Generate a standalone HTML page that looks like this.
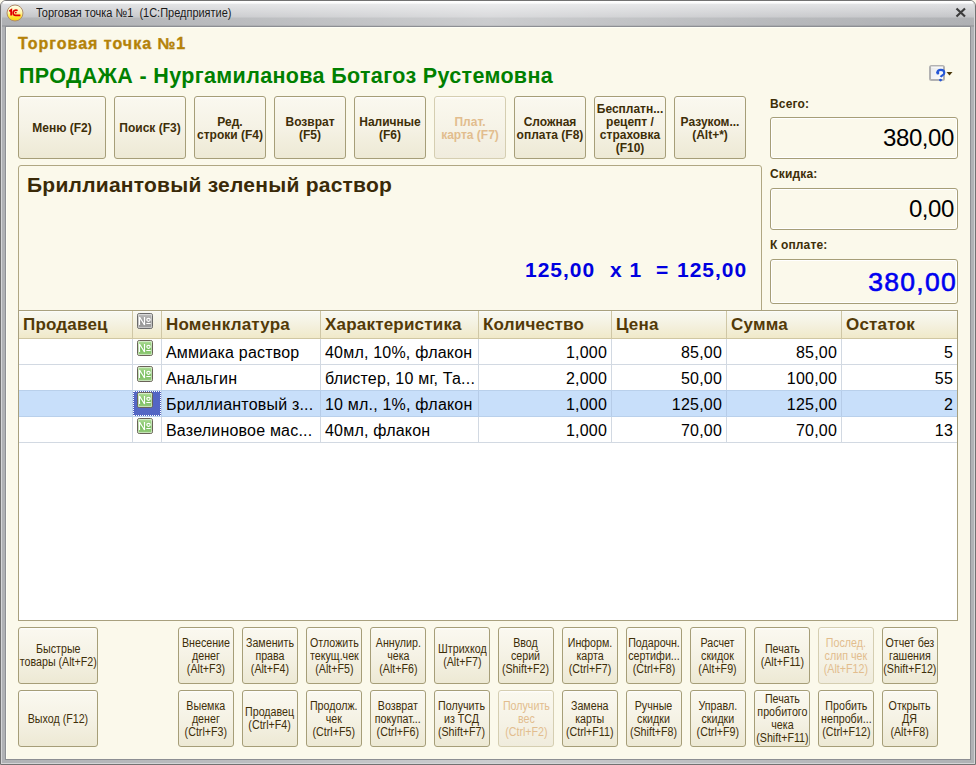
<!DOCTYPE html>
<html><head><meta charset="utf-8">
<style>
*{box-sizing:border-box;margin:0;padding:0}
html,body{width:976px;height:765px;overflow:hidden;background:#FBF9EB;font-family:"Liberation Sans",sans-serif}
.abs{position:absolute;white-space:nowrap}
#win{position:absolute;left:0;top:0;width:976px;height:765px;border-radius:6px 6px 0 0;border:1px solid #727272;
 background:
  linear-gradient(90deg,rgba(255,255,255,0) 0%,rgba(255,255,255,0.15) 25%,rgba(255,255,255,0.35) 50%,rgba(255,255,255,0.1) 80%,rgba(255,255,255,0) 100%),
  linear-gradient(#FFFFFF 0px,#FCFCFC 2px,#DFE0E2 3.5px,#C5C6C9 16px,#B1B3B6 17px,#AEB0B3 24px,#8E9094 25px,#B0B2B5 26px,#B0B2B5 100%)}
#winin{position:absolute;left:0;top:0;right:0;bottom:0;border-left:1px solid #D4D5D7;border-right:1px solid #D4D5D7;border-bottom:1px solid #D4D5D7;border-top:1px solid #FFFFFF;border-radius:5px 5px 0 0}
#content{position:absolute;left:6px;top:27px;width:964px;height:732px;background:#FBF9EB;box-shadow:0 0 0 1px #8D8F93;border-left:1px solid #FFFFF5;border-top:1px solid #FFFFF5}
#title{position:absolute;left:36px;top:6px;font-size:12px;color:#1A1A1A;white-space:nowrap;transform-origin:0 0;transform:scaleX(0.915)}
.logo{position:absolute;left:7px;top:5px;width:16px;height:16px;border-radius:50%;background:linear-gradient(#FFFEF4,#FFF7B8 40%,#FFE83A 70%,#F8D800);border:1px solid #B09070}
.btn{position:absolute;border:1px solid #A69E78;border-radius:3px;background:linear-gradient(#FFFFFF 0px,#FAF8EF 2px,#F5F2E5 50%,#EDE9D4 100%);color:#3E2E08;text-align:center;display:flex;align-items:center;justify-content:center}
.tb{font-weight:bold;font-size:12px;line-height:13px;padding-top:2px}
.bb{font-size:12px;line-height:13px;padding-top:1px}
.bb span{display:inline-block;transform:scaleX(0.89);white-space:nowrap;flex-shrink:0}
.btn.dis{color:#E2BD8E;border-color:#D5CEB1;background:linear-gradient(#FFFFFF 0px,#FAF8EE 2px,#F6F3E7 50%,#F0ECDD 100%)}
.lbl{position:absolute;font-weight:bold;font-size:12px;color:#3E2E08;letter-spacing:0.15px}
.fld{position:absolute;left:770px;width:188px;border:1px solid #A69E78;border-radius:3px;background:#FBF9EB;box-shadow:inset 0 0 0 1px #FFFFFF;text-align:right;font-size:24px;color:#000;padding-right:3px;letter-spacing:-0.4px}
.panel{position:absolute;border:1px solid #B0A783;border-radius:3px 3px 0 0;background:#FBF9EB}
.th{position:absolute;font-weight:bold;font-size:17px;line-height:20px;color:#533A08;white-space:nowrap;letter-spacing:0.2px}
.td{position:absolute;font-size:16px;line-height:25px;color:#000;white-space:nowrap;letter-spacing:0.2px}
</style></head><body>
<div id="win"><div id="winin"></div></div>
<svg class="abs" style="left:6px;top:4px" width="19" height="19" viewBox="6 4 19 19"><defs><linearGradient id="lg" x1="0" y1="0" x2="0" y2="1"><stop offset="0" stop-color="#FFFFF0"/><stop offset="0.45" stop-color="#FFF7B0"/><stop offset="0.7" stop-color="#FFE840"/><stop offset="1" stop-color="#F6D200"/></linearGradient></defs><circle cx="15" cy="13" r="8" fill="url(#lg)" stroke="#B08C6C" stroke-width="1"/><path d="M9.3 11.2L11.2 10V15.6" stroke="#E00000" stroke-width="1.9" fill="none"/><path d="M17.6 10.6C16.8 10.1 15.9 10 15.2 10.2C13.6 10.7 13 12 13.2 13.3C13.4 14.6 14.4 15.3 15.6 15.3H20.4" stroke="#E00000" stroke-width="1.7" fill="none"/><circle cx="15.8" cy="12.6" r="0.9" fill="#E00000"/></svg>
<div id="title">Торговая точка №1&nbsp; (1С:Предприятие)</div>
<div id="content"></div>
<svg class="abs" style="left:955px;top:7px" width="12" height="11" viewBox="0 0 12 11"><path d="M1.5 1.5 L10 9.5 M10 1.5 L1.5 9.5" stroke="#3C3C3C" stroke-width="2.2"/></svg>
<div class="abs" style="left:18px;top:35px;font-weight:bold;font-size:16px;color:#B48208;letter-spacing:1.0px;-webkit-text-stroke:0.35px #B48208">Торговая точка №1</div>
<div class="abs" style="left:19px;top:64px;font-weight:bold;font-size:21.5px;color:#008000;letter-spacing:0.35px">ПРОДАЖА - Нургамиланова Ботагоз Рустемовна</div>
<svg class="abs" style="left:926px;top:62px" width="30" height="24" viewBox="926 62 30 24"><defs><linearGradient id="hg" x1="0" y1="0" x2="1" y2="1"><stop offset="0" stop-color="#E6E8EA"/><stop offset="1" stop-color="#FFFFFF"/></linearGradient></defs><rect x="930" y="66" width="14" height="14" rx="1.5" fill="url(#hg)" stroke="#B2B2B2" stroke-width="2"/><path d="M931 67H943" stroke="#FFFFFF" stroke-width="1"/><path d="M937.2 73C937.4 70.7 939.4 69.9 940.9 69.9C943.1 69.9 944.3 71.2 944.3 72.9C944.3 75 941.4 75.4 940.7 77" stroke="#2456D6" stroke-width="2.1" fill="none"/><circle cx="937.8" cy="73.1" r="1.5" fill="#2456D6"/><circle cx="940.5" cy="80.1" r="1.45" fill="#2456D6"/><path d="M946.5 72H952.5L949.5 75.5Z" fill="#4A3608"/></svg>
<div class="btn tb" style="left:18px;top:96px;width:88px;height:63px">Меню (F2)</div>
<div class="btn tb" style="left:114px;top:96px;width:72px;height:63px">Поиск (F3)</div>
<div class="btn tb" style="left:194px;top:96px;width:72px;height:63px">Ред.<br>строки (F4)</div>
<div class="btn tb" style="left:274px;top:96px;width:72px;height:63px">Возврат<br>(F5)</div>
<div class="btn tb" style="left:354px;top:96px;width:72px;height:63px">Наличные<br>(F6)</div>
<div class="btn tb dis" style="left:434px;top:96px;width:72px;height:63px">Плат.<br>карта (F7)</div>
<div class="btn tb" style="left:514px;top:96px;width:72px;height:63px">Сложная<br>оплата (F8)</div>
<div class="btn tb" style="left:594px;top:96px;width:72px;height:63px">Бесплатн...<br>рецепт /<br>страховка<br>(F10)</div>
<div class="btn tb" style="left:674px;top:96px;width:72px;height:63px">Разуком...<br>(Alt+*)</div>
<div class="lbl" style="left:770px;top:97px">Всего:</div>
<div class="fld" style="top:117px;height:42px;line-height:40px">380,00</div>
<div class="lbl" style="left:770px;top:167px">Скидка:</div>
<div class="fld" style="top:188px;height:42px;line-height:40px">0,00</div>
<div class="lbl" style="left:770px;top:238px">К оплате:</div>
<div class="fld" style="top:259px;height:45px;line-height:44px;color:#0000F0;font-weight:normal;-webkit-text-stroke:0.6px #0000F0;font-size:26.5px;letter-spacing:1.3px;padding-right:0px">380,00</div>
<div class="panel" style="left:18px;top:165px;width:744px;height:150px"></div>
<div class="abs" style="left:27px;top:173px;font-weight:bold;font-size:21px;color:#3A2A08;letter-spacing:0.25px">Бриллиантовый зеленый раствор</div>
<div class="abs" style="left:525px;top:258px;font-weight:bold;font-size:21px;color:#0000E0;letter-spacing:1.0px">125,00</div>
<div class="abs" style="left:610px;top:258px;font-weight:bold;font-size:21px;color:#0000E0;letter-spacing:1.0px">x 1</div>
<div class="abs" style="left:656px;top:258px;font-weight:bold;font-size:21px;color:#0000E0;letter-spacing:1.0px">=</div>
<div class="abs" style="left:677px;top:258px;font-weight:bold;font-size:21px;color:#0000E0;letter-spacing:1.0px">125,00</div>
<div class="abs" style="left:18px;top:310px;width:940px;height:311px;border:1px solid #A8A07E;background:#FFFFFF"></div>
<div class="abs" style="left:19px;top:311px;width:938px;height:28px;background:linear-gradient(#FFFFFF 0px,#F8F8F1 1px,#F4F1E0 50%,#F0E9C9 100%);border-bottom:1px solid #D0C7A2"></div>
<div class="abs" style="left:132px;top:311px;width:1px;height:27px;background:#CFC7A6"></div>
<div class="abs" style="left:132px;top:339px;width:1px;height:103px;background:#D2D9E2"></div>
<div class="abs" style="left:161px;top:311px;width:1px;height:27px;background:#CFC7A6"></div>
<div class="abs" style="left:161px;top:339px;width:1px;height:103px;background:#D2D9E2"></div>
<div class="abs" style="left:320px;top:311px;width:1px;height:27px;background:#CFC7A6"></div>
<div class="abs" style="left:320px;top:339px;width:1px;height:103px;background:#D2D9E2"></div>
<div class="abs" style="left:478px;top:311px;width:1px;height:27px;background:#CFC7A6"></div>
<div class="abs" style="left:478px;top:339px;width:1px;height:103px;background:#D2D9E2"></div>
<div class="abs" style="left:611px;top:311px;width:1px;height:27px;background:#CFC7A6"></div>
<div class="abs" style="left:611px;top:339px;width:1px;height:103px;background:#D2D9E2"></div>
<div class="abs" style="left:726px;top:311px;width:1px;height:27px;background:#CFC7A6"></div>
<div class="abs" style="left:726px;top:339px;width:1px;height:103px;background:#D2D9E2"></div>
<div class="abs" style="left:841px;top:311px;width:1px;height:27px;background:#CFC7A6"></div>
<div class="abs" style="left:841px;top:339px;width:1px;height:103px;background:#D2D9E2"></div>
<div class="abs" style="left:19px;top:364px;width:938px;height:1px;background:#D2D9E2"></div>
<div class="abs" style="left:19px;top:390px;width:938px;height:1px;background:#D2D9E2"></div>
<div class="abs" style="left:19px;top:416px;width:938px;height:1px;background:#D2D9E2"></div>
<div class="abs" style="left:19px;top:442px;width:938px;height:1px;background:#D2D9E2"></div>
<div class="abs" style="left:19px;top:390px;width:938px;height:27px;background:#C8DFFA;border-top:1px solid #B9D0EB;border-bottom:1px solid #B9D0EB"></div>
<div class="abs" style="left:132px;top:391px;width:1px;height:25px;background:#B6CCE8"></div>
<div class="abs" style="left:161px;top:391px;width:1px;height:25px;background:#B6CCE8"></div>
<div class="abs" style="left:320px;top:391px;width:1px;height:25px;background:#B6CCE8"></div>
<div class="abs" style="left:478px;top:391px;width:1px;height:25px;background:#B6CCE8"></div>
<div class="abs" style="left:611px;top:391px;width:1px;height:25px;background:#B6CCE8"></div>
<div class="abs" style="left:726px;top:391px;width:1px;height:25px;background:#B6CCE8"></div>
<div class="abs" style="left:841px;top:391px;width:1px;height:25px;background:#B6CCE8"></div>
<div class="abs" style="left:133px;top:391px;width:28px;height:25px;background:#5366C4;outline:1px dotted #FFFFFF;outline-offset:-1px"></div>
<div class="th" style="left:23px;top:315px">Продавец</div>
<div class="th" style="left:166px;top:315px">Номенклатура</div>
<div class="th" style="left:325px;top:315px">Характеристика</div>
<div class="th" style="left:483px;top:315px">Количество</div>
<div class="th" style="left:616px;top:315px">Цена</div>
<div class="th" style="left:731px;top:315px">Сумма</div>
<div class="th" style="left:846px;top:315px">Остаток</div>
<svg class="abs" style="left:137px;top:313px" width="16" height="16" viewBox="0 0 16 16"><defs><linearGradient id="g313" x1="0" y1="0" x2="0" y2="1"><stop offset="0" stop-color="#C4C4C4"/><stop offset="0.55" stop-color="#929292"/><stop offset="1" stop-color="#A2A2A2"/></linearGradient></defs><rect x="0.5" y="0.5" width="15" height="15" rx="1.8" fill="url(#g313)" stroke="#6A6A6A"/><rect x="1.5" y="1.5" width="13" height="13" fill="none" stroke="rgba(255,255,255,0.4)" stroke-width="1"/><path d="M2.5 12V4L7.5 12V4" stroke="#FFFFFF" stroke-width="1.2" fill="none" stroke-linejoin="bevel"/><ellipse cx="11.5" cy="6.8" rx="1.7" ry="1.5" stroke="#FFFFFF" stroke-width="1.2" fill="none"/><path d="M9.3 10.5H13.7" stroke="#FFFFFF" stroke-width="1.1"/></svg>
<svg class="abs" style="left:137px;top:340px" width="16" height="16" viewBox="0 0 16 16"><defs><linearGradient id="g340" x1="0" y1="0" x2="0" y2="1"><stop offset="0" stop-color="#B8E2A2"/><stop offset="0.55" stop-color="#74BC58"/><stop offset="1" stop-color="#9ACE82"/></linearGradient></defs><rect x="0.5" y="0.5" width="15" height="15" rx="1.8" fill="url(#g340)" stroke="#6A6258"/><rect x="1.5" y="1.5" width="13" height="13" fill="none" stroke="rgba(255,255,255,0.45)" stroke-width="1"/><path d="M2.5 12V4L7.5 12V4" stroke="#FFFFFF" stroke-width="1.2" fill="none" stroke-linejoin="bevel"/><ellipse cx="11.5" cy="6.8" rx="1.7" ry="1.5" stroke="#FFFFFF" stroke-width="1.2" fill="none"/><path d="M9.3 10.5H13.7" stroke="#FFFFFF" stroke-width="1.1"/></svg>
<div class="td" style="left:166px;top:340px">Аммиака раствор</div>
<div class="td" style="left:325px;top:340px">40мл, 10%, флакон</div>
<div class="td" style="left:478px;width:129px;text-align:right;top:340px">1,000</div>
<div class="td" style="left:611px;width:111px;text-align:right;top:340px">85,00</div>
<div class="td" style="left:726px;width:111px;text-align:right;top:340px">85,00</div>
<div class="td" style="left:841px;width:112px;text-align:right;top:340px">5</div>
<svg class="abs" style="left:137px;top:366px" width="16" height="16" viewBox="0 0 16 16"><defs><linearGradient id="g366" x1="0" y1="0" x2="0" y2="1"><stop offset="0" stop-color="#B8E2A2"/><stop offset="0.55" stop-color="#74BC58"/><stop offset="1" stop-color="#9ACE82"/></linearGradient></defs><rect x="0.5" y="0.5" width="15" height="15" rx="1.8" fill="url(#g366)" stroke="#6A6258"/><rect x="1.5" y="1.5" width="13" height="13" fill="none" stroke="rgba(255,255,255,0.45)" stroke-width="1"/><path d="M2.5 12V4L7.5 12V4" stroke="#FFFFFF" stroke-width="1.2" fill="none" stroke-linejoin="bevel"/><ellipse cx="11.5" cy="6.8" rx="1.7" ry="1.5" stroke="#FFFFFF" stroke-width="1.2" fill="none"/><path d="M9.3 10.5H13.7" stroke="#FFFFFF" stroke-width="1.1"/></svg>
<div class="td" style="left:166px;top:366px">Анальгин</div>
<div class="td" style="left:325px;top:366px">блистер, 10 мг, Та...</div>
<div class="td" style="left:478px;width:129px;text-align:right;top:366px">2,000</div>
<div class="td" style="left:611px;width:111px;text-align:right;top:366px">50,00</div>
<div class="td" style="left:726px;width:111px;text-align:right;top:366px">100,00</div>
<div class="td" style="left:841px;width:112px;text-align:right;top:366px">55</div>
<svg class="abs" style="left:137px;top:392px" width="16" height="16" viewBox="0 0 16 16"><defs><linearGradient id="g392" x1="0" y1="0" x2="0" y2="1"><stop offset="0" stop-color="#B8E2A2"/><stop offset="0.55" stop-color="#74BC58"/><stop offset="1" stop-color="#9ACE82"/></linearGradient></defs><rect x="0.5" y="0.5" width="15" height="15" rx="1.8" fill="url(#g392)" stroke="#6A6258"/><rect x="1.5" y="1.5" width="13" height="13" fill="none" stroke="rgba(255,255,255,0.45)" stroke-width="1"/><path d="M2.5 12V4L7.5 12V4" stroke="#FFFFFF" stroke-width="1.2" fill="none" stroke-linejoin="bevel"/><ellipse cx="11.5" cy="6.8" rx="1.7" ry="1.5" stroke="#FFFFFF" stroke-width="1.2" fill="none"/><path d="M9.3 10.5H13.7" stroke="#FFFFFF" stroke-width="1.1"/></svg>
<div class="td" style="left:166px;top:392px">Бриллиантовый з...</div>
<div class="td" style="left:325px;top:392px">10 мл., 1%, флакон</div>
<div class="td" style="left:478px;width:129px;text-align:right;top:392px">1,000</div>
<div class="td" style="left:611px;width:111px;text-align:right;top:392px">125,00</div>
<div class="td" style="left:726px;width:111px;text-align:right;top:392px">125,00</div>
<div class="td" style="left:841px;width:112px;text-align:right;top:392px">2</div>
<svg class="abs" style="left:137px;top:418px" width="16" height="16" viewBox="0 0 16 16"><defs><linearGradient id="g418" x1="0" y1="0" x2="0" y2="1"><stop offset="0" stop-color="#B8E2A2"/><stop offset="0.55" stop-color="#74BC58"/><stop offset="1" stop-color="#9ACE82"/></linearGradient></defs><rect x="0.5" y="0.5" width="15" height="15" rx="1.8" fill="url(#g418)" stroke="#6A6258"/><rect x="1.5" y="1.5" width="13" height="13" fill="none" stroke="rgba(255,255,255,0.45)" stroke-width="1"/><path d="M2.5 12V4L7.5 12V4" stroke="#FFFFFF" stroke-width="1.2" fill="none" stroke-linejoin="bevel"/><ellipse cx="11.5" cy="6.8" rx="1.7" ry="1.5" stroke="#FFFFFF" stroke-width="1.2" fill="none"/><path d="M9.3 10.5H13.7" stroke="#FFFFFF" stroke-width="1.1"/></svg>
<div class="td" style="left:166px;top:418px">Вазелиновое мас...</div>
<div class="td" style="left:325px;top:418px">40мл, флакон</div>
<div class="td" style="left:478px;width:129px;text-align:right;top:418px">1,000</div>
<div class="td" style="left:611px;width:111px;text-align:right;top:418px">70,00</div>
<div class="td" style="left:726px;width:111px;text-align:right;top:418px">70,00</div>
<div class="td" style="left:841px;width:112px;text-align:right;top:418px">13</div>
<div class="btn bb" style="left:18px;top:627px;width:80px;height:57px"><span>Быстрые<br>товары (Alt+F2)</span></div>
<div class="btn bb" style="left:18px;top:690px;width:80px;height:57px;padding-top:2px"><span>Выход (F12)</span></div>
<div class="btn bb" style="left:178px;top:627px;width:56px;height:57px"><span>Внесение<br>денег<br>(Alt+F3)</span></div>
<div class="btn bb" style="left:242px;top:627px;width:56px;height:57px"><span>Заменить<br>права<br>(Alt+F4)</span></div>
<div class="btn bb" style="left:306px;top:627px;width:56px;height:57px"><span>Отложить<br>текущ.чек<br>(Alt+F5)</span></div>
<div class="btn bb" style="left:370px;top:627px;width:56px;height:57px"><span>Аннулир.<br>чека<br>(Alt+F6)</span></div>
<div class="btn bb" style="left:434px;top:627px;width:56px;height:57px"><span>Штрихкод<br>(Alt+F7)</span></div>
<div class="btn bb" style="left:498px;top:627px;width:56px;height:57px"><span>Ввод<br>серий<br>(Shift+F2)</span></div>
<div class="btn bb" style="left:562px;top:627px;width:56px;height:57px"><span>Информ.<br>карта<br>(Ctrl+F7)</span></div>
<div class="btn bb" style="left:626px;top:627px;width:56px;height:57px"><span>Подарочн.<br>сертифи...<br>(Ctrl+F8)</span></div>
<div class="btn bb" style="left:690px;top:627px;width:56px;height:57px"><span>Расчет<br>скидок<br>(Alt+F9)</span></div>
<div class="btn bb" style="left:754px;top:627px;width:56px;height:57px"><span>Печать<br>(Alt+F11)</span></div>
<div class="btn bb dis" style="left:818px;top:627px;width:56px;height:57px"><span>Послед.<br>слип чек<br>(Alt+F12)</span></div>
<div class="btn bb" style="left:882px;top:627px;width:56px;height:57px"><span>Отчет без<br>гашения<br>(Shift+F12)</span></div>
<div class="btn bb" style="left:178px;top:690px;width:56px;height:57px"><span>Выемка<br>денег<br>(Ctrl+F3)</span></div>
<div class="btn bb" style="left:242px;top:690px;width:56px;height:57px"><span>Продавец<br>(Ctrl+F4)</span></div>
<div class="btn bb" style="left:306px;top:690px;width:56px;height:57px"><span>Продолж.<br>чек<br>(Ctrl+F5)</span></div>
<div class="btn bb" style="left:370px;top:690px;width:56px;height:57px"><span>Возврат<br>покупат...<br>(Ctrl+F6)</span></div>
<div class="btn bb" style="left:434px;top:690px;width:56px;height:57px"><span>Получить<br>из ТСД<br>(Shift+F7)</span></div>
<div class="btn bb dis" style="left:498px;top:690px;width:56px;height:57px"><span>Получить<br>вес<br>(Ctrl+F2)</span></div>
<div class="btn bb" style="left:562px;top:690px;width:56px;height:57px"><span>Замена<br>карты<br>(Ctrl+F11)</span></div>
<div class="btn bb" style="left:626px;top:690px;width:56px;height:57px"><span>Ручные<br>скидки<br>(Shift+F8)</span></div>
<div class="btn bb" style="left:690px;top:690px;width:56px;height:57px"><span>Управл.<br>скидки<br>(Ctrl+F9)</span></div>
<div class="btn bb" style="left:754px;top:690px;width:56px;height:57px"><span>Печать<br>пробитого<br>чека<br>(Shift+F11)</span></div>
<div class="btn bb" style="left:818px;top:690px;width:56px;height:57px"><span>Пробить<br>непроби...<br>(Ctrl+F12)</span></div>
<div class="btn bb" style="left:882px;top:690px;width:56px;height:57px"><span>Открыть<br>ДЯ<br>(Alt+F8)</span></div>
</body></html>
